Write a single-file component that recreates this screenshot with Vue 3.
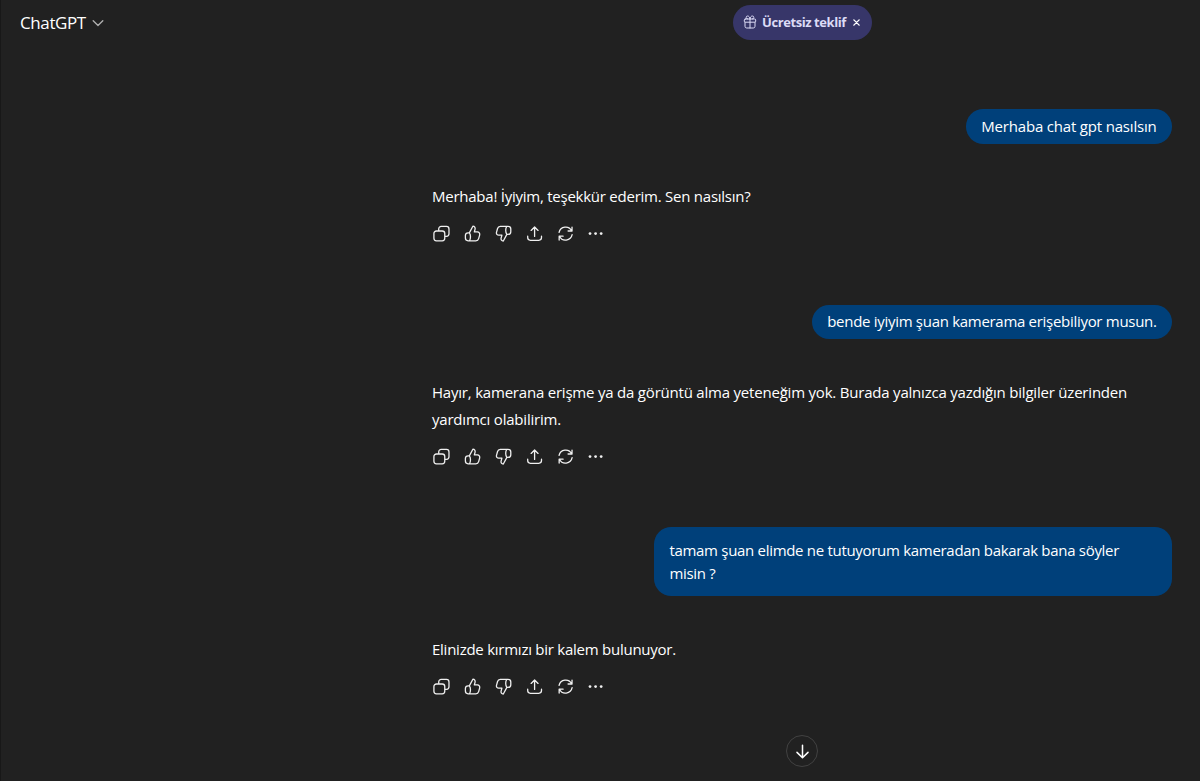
<script setup>
import { ref } from 'vue'

// Conversation, oldest message first. tracking is the letter spacing in px
const messages = ref([
  { id: 1, role: 'user', tracking: -0.18, lines: ['Merhaba chat gpt nasılsın'] },
  {
    id: 2,
    role: 'assistant',
    tracking: -0.245,
    lines: ['Merhaba! İyiyim, teşekkür ederim. Sen nasılsın?'],
  },
  {
    id: 3,
    role: 'user',
    tracking: -0.295,
    lines: ['bende iyiyim şuan kamerama erişebiliyor musun.'],
  },
  {
    id: 4,
    role: 'assistant',
    tracking: -0.207,
    lines: [
      'Hayır, kamerana erişme ya da görüntü alma yeteneğim yok. Burada yalnızca yazdığın bilgiler üzerinden',
      'yardımcı olabilirim.',
    ],
  },
  {
    id: 5,
    role: 'user',
    tracking: -0.3,
    lines: ['tamam şuan elimde ne tutuyorum kameradan bakarak bana söyler', 'misin ?'],
  },
  { id: 6, role: 'assistant', tracking: -0.25, lines: ['Elinizde kırmızı bir kalem bulunuyor.'] },
])

// Icons under each answer, stroked on a 20x20 grid
const actions = [
  {
    name: 'copy',
    label: 'Kopyala',
    d: 'M5.1 7.3h5.6a2.6 2.6 0 0 1 2.6 2.6v5a2.6 2.6 0 0 1-2.6 2.6H4.6A2.6 2.6 0 0 1 2 14.900V9.900a2.600 2.600 0 0 1 2.600-2.600zM7 7V5.100a2.600 2.600 0 0 1 2.600-2.600h5.500a2.600 2.600 0 0 1 2.600 2.600v5.100a2.600 2.600 0 0 1-2.600 2.600h-1.600',
  },
  {
    name: 'like',
    label: 'İyi yanıt',
    d: 'M6.6 9.2 10.3 2.3c1.7.1 2.700 1.400 2.300 3l-.8 3h3.200c1.700 0 2.800 1.400 2.400 3l-1.100 4c-.4 1.400-1.400 2.200-2.900 2.200H5.300c-1.600 0-2.800-1.200-2.800-2.800V12c0-1.600 1.200-2.800 2.800-2.800h1.300c1 1.100 1.200 2.400 1.200 4.200 0 1.700-.3 3-1.100 4.100',
  },
  {
    name: 'dislike',
    label: 'Kötü yanıt',
    d: 'M13.400 10.800 9.700 17.700c-1.700-.1-2.700-1.400-2.300-3l.8-3H5c-1.700 0-2.800-1.400-2.400-3l1.100-4c.4-1.400 1.400-2.200 2.900-2.200h8.100c1.600 0 2.800 1.200 2.800 2.800V8c0 1.600-1.200 2.800-2.800 2.800h-1.300c-1-1.100-1.200-2.400-1.200-4.200 0-1.700.3-3 1.100-4.100',
  },
  {
    name: 'share',
    label: 'Paylaş',
    d: 'M10 13V3.200M6.400 6.700 10 3.100l3.600 3.600M2.800 12.700v1.500a2.800 2.800 0 0 0 2.800 2.800h8.800a2.800 2.800 0 0 0 2.800-2.800v-1.500',
  },
  {
    name: 'retry',
    label: 'Yeniden dene',
    d: 'M3.200 8.800A7 7 0 0 1 16.400 7.200M16.700 3.200v4.100h-4.100M16.800 11.200A7 7 0 0 1 3.600 12.800M3.300 16.800v-4.100h4.100',
  },
]

const showOffer = ref(true)
</script>

<template>
  <div class="app">
    <header class="topbar">
      <button class="model">
        ChatGPT
        <svg class="chevron" viewBox="0 0 12 12">
          <path d="M1.200 3.700 6 8.500l4.800-4.800" />
        </svg>
      </button>

      <div v-if="showOffer" class="offer">
        <svg class="gift" viewBox="0 0 14 14">
          <path d="M2.300 4h9.400a1 1 0 0 1 1 1v1.200a1 1 0 0 1-1 1H2.300a1 1 0 0 1-1-1V5a1 1 0 0 1 1-1zM2 7.200v4.100a1.700 1.700 0 0 0 1.700 1.700h6.600a1.700 1.700 0 0 0 1.700-1.700V7.200M7 4v9M7 4C6.600 2 5.800 1 4.700 1a1.500 1.500 0 0 0 0 3M7 4c.4-2 1.200-3 2.300-3a1.500 1.500 0 0 1 0 3" />
        </svg>
        <span class="offer-text">Ücretsiz teklif</span>
        <button class="offer-close" aria-label="Kapat" @click="showOffer = false">
          <svg viewBox="0 0 8 8">
            <path d="m1 1 6 6M7 1 1 7" />
          </svg>
        </button>
      </div>
    </header>

    <main class="thread">
      <article v-for="message in messages" :key="message.id" class="turn" :class="message.role">
        <div
          class="text"
          :class="{ multiline: message.lines.length > 1 }"
          :style="{ letterSpacing: `${message.tracking}px` }"
        >
          <p v-for="line in message.lines" :key="line">
            {{ line }}
          </p>
        </div>

        <div v-if="message.role === 'assistant'" class="actions">
          <button v-for="action in actions" :key="action.name" :aria-label="action.label">
            <svg viewBox="0 0 20 20">
              <path :d="action.d" />
            </svg>
          </button>
          <button aria-label="Diğer">
            <svg class="dots" viewBox="0 0 20 20">
              <circle cx="4.200" cy="10" r="1.450" />
              <circle cx="10" cy="10" r="1.450" />
              <circle cx="15.800" cy="10" r="1.450" />
            </svg>
          </button>
        </div>
      </article>
    </main>

    <button class="scroll-down" aria-label="En alta git">
      <svg viewBox="0 0 20 20">
        <path d="M10 3.300v13M4.200 10.900 10 16.600l5.800-5.700" />
      </svg>
    </button>
  </div>
</template>

<style>
body {
  background: #212121;
}
</style>

<style scoped>
.app {
  position: relative;
  box-sizing: border-box;
  height: 781px;
  overflow: hidden;
  border-left: 1px solid #181818;
  background: #212121;
  color: #fff;
  font-family: 'Open Sans', 'Noto Sans', sans-serif;
  font-size: 15px;
}

button {
  display: flex;
  align-items: center;
  justify-content: center;
  padding: 0;
  border: 0;
  background: none;
  color: inherit;
  font: inherit;
  cursor: pointer;
}

svg {
  display: block;
  fill: none;
  stroke: currentColor;
  stroke-width: 1.35;
  stroke-linecap: round;
  stroke-linejoin: round;
}

p {
  margin: 0;
  white-space: nowrap;
}

/* 顶栏 */
.topbar {
  display: grid;
  grid-template-columns: 732px auto;
  justify-content: start;
  align-items: center;
  height: 44px;
}

.model {
  justify-self: start;
  gap: 6px;
  padding-left: 19px;
  font-size: 17px;
  letter-spacing: -0.4px;
}

.chevron {
  width: 12px;
  height: 12px;
  margin-top: 1px;
  color: #afafaf;
}

.offer {
  display: flex;
  align-items: center;
  box-sizing: border-box;
  width: 139px;
  height: 35px;
  padding-left: 10px;
  border-radius: 18px;
  background: #373669;
  color: #dcdbf6;
}

.gift {
  width: 14px;
  height: 14px;
  margin-right: 5px;
  stroke-width: 1;
}

.offer-text {
  width: 84px;
  font-size: 13px;
  font-weight: 700;
  letter-spacing: -0.42px;
  white-space: nowrap;
}

.offer-close {
  margin-left: 7px;
  color: #fff;
}

.offer-close svg {
  width: 7px;
  height: 7px;
  stroke-width: 1.6;
}

/* 对话 */
.thread {
  display: flex;
  flex-direction: column;
  width: 740px;
  margin-left: 431px;
  padding-top: 65px;
}

.turn {
  display: flex;
  flex-direction: column;
}

.user {
  align-items: flex-end;
  margin-bottom: 39.7px;
}

.user .text {
  padding: 5.75px 15.4px;
  border-radius: 17.3px;
  background: #00407a;
  line-height: 23px;
}

.user .multiline {
  box-sizing: border-box;
  width: 518px;
  padding-block: 11.5px;
}

.assistant {
  margin-bottom: 55.1px;
}

.assistant .text {
  line-height: 26.9px;
}

.actions {
  display: flex;
  margin: 8.6px 0 0 -5.4px;
  color: #f0f0f0;
}

.actions button {
  width: 30.8px;
  height: 30.8px;
}

.actions svg {
  width: 19.2px;
  height: 19.2px;
}

.actions .dots {
  fill: currentColor;
  stroke: none;
}

/* 悬浮的滚动按钮 */
.scroll-down {
  position: absolute;
  bottom: 14px;
  left: 785px;
  box-sizing: border-box;
  width: 32px;
  height: 32px;
  border: 1px solid #424242;
  border-radius: 50%;
  background: #212121;
}

.scroll-down svg {
  width: 19px;
  height: 19px;
  stroke-width: 1.6;
}
</style>
